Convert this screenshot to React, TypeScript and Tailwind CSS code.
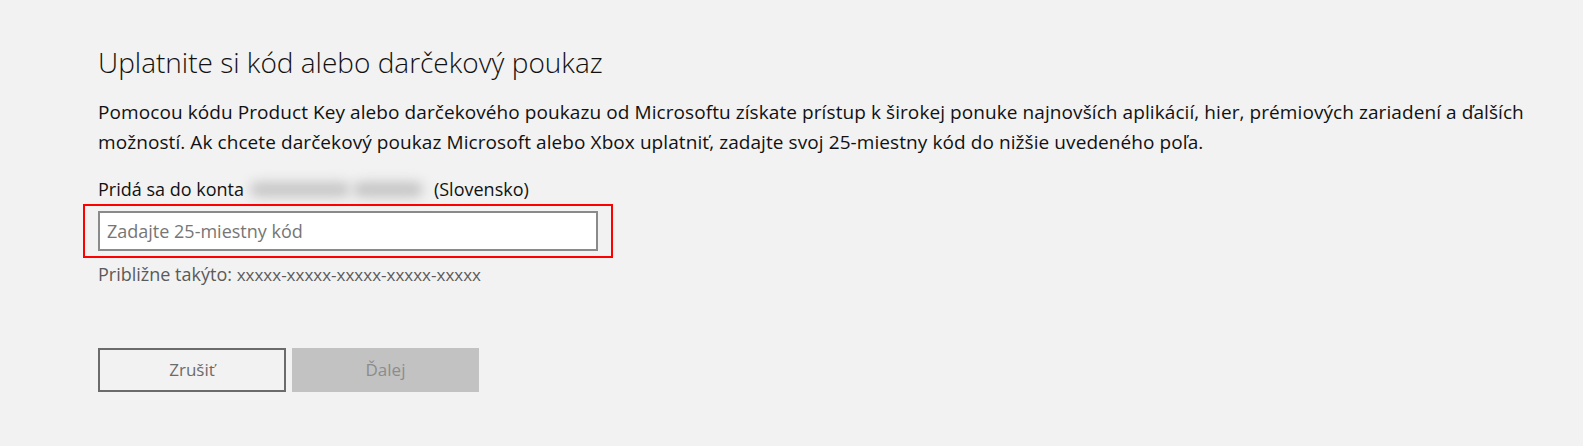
export default function App() {
  return (
    <div className="min-h-[446px] w-full bg-[#f2f2f2] font-['Open_Sans',sans-serif] text-black">
      <div className="flex w-[1540px] flex-col pl-[98px] pt-[42px]">
        <h1 className="text-[28px] font-light leading-[40px] text-[#111]">
          Uplatnite si kód alebo darčekový poukaz
        </h1>
        <p className="mt-[15px] text-[19px] leading-[30px] tracking-[0.08px] text-[#111]">
          Pomocou kódu Product Key alebo darčekového poukazu od Microsoftu získate prístup k širokej
          ponuke najnovších aplikácií, hier, prémiových zariadení a ďalších možností. Ak chcete
          darčekový poukaz Microsoft alebo Xbox uplatniť, zadajte svoj 25-miestny kód do nižšie
          uvedeného poľa.
        </p>
        <div className="mt-[20px] flex items-center text-[18px] leading-[24px] text-[#111]">
          <span>Pridá sa do konta</span>
          {/* blurred e-mail address */}
          <div aria-hidden className="ml-[6px] mr-[8px] flex h-[24px] w-[176px] items-center gap-[3px]">
            <div className="h-[15px] w-[100px] rounded-full bg-[#c6c6c6] blur-[6px]" />
            <div className="h-[15px] w-[70px] rounded-full bg-[#c4c4c4] blur-[6px]" />
          </div>
          <span>(Slovensko)</span>
        </div>
        <div className="relative mt-[10px] w-[500px]">
          <input
            type="text"
            placeholder="Zadajte 25-miestny kód"
            className="h-[40px] w-full border-2 border-[#8a8a8a] bg-white px-[7px] text-[18px] text-black outline-none placeholder:text-[#767676]"
          />
          <div className="pointer-events-none absolute -inset-x-[15px] -inset-y-[7px] border-2 border-[#ff0000]" />
        </div>
        <div className="mt-[11px] text-[18px] leading-[24px] text-[#5a5a5a]">
          Približne takýto: <span className="text-[17px]">xxxxx-xxxxx-xxxxx-xxxxx-xxxxx</span>
        </div>
        <div className="mt-[61px] flex gap-[6px]">
          <button
            type="button"
            className="h-[44px] w-[188px] border-2 border-[#6b6b6b] bg-transparent text-[17px] text-[#6b6b6b]"
          >
            Zrušiť
          </button>
          <button
            type="button"
            disabled
            className="h-[44px] w-[187px] bg-[#c2c2c2] text-[17px] text-[#8c8c8c]"
          >
            Ďalej
          </button>
        </div>
      </div>
    </div>
  )
}
